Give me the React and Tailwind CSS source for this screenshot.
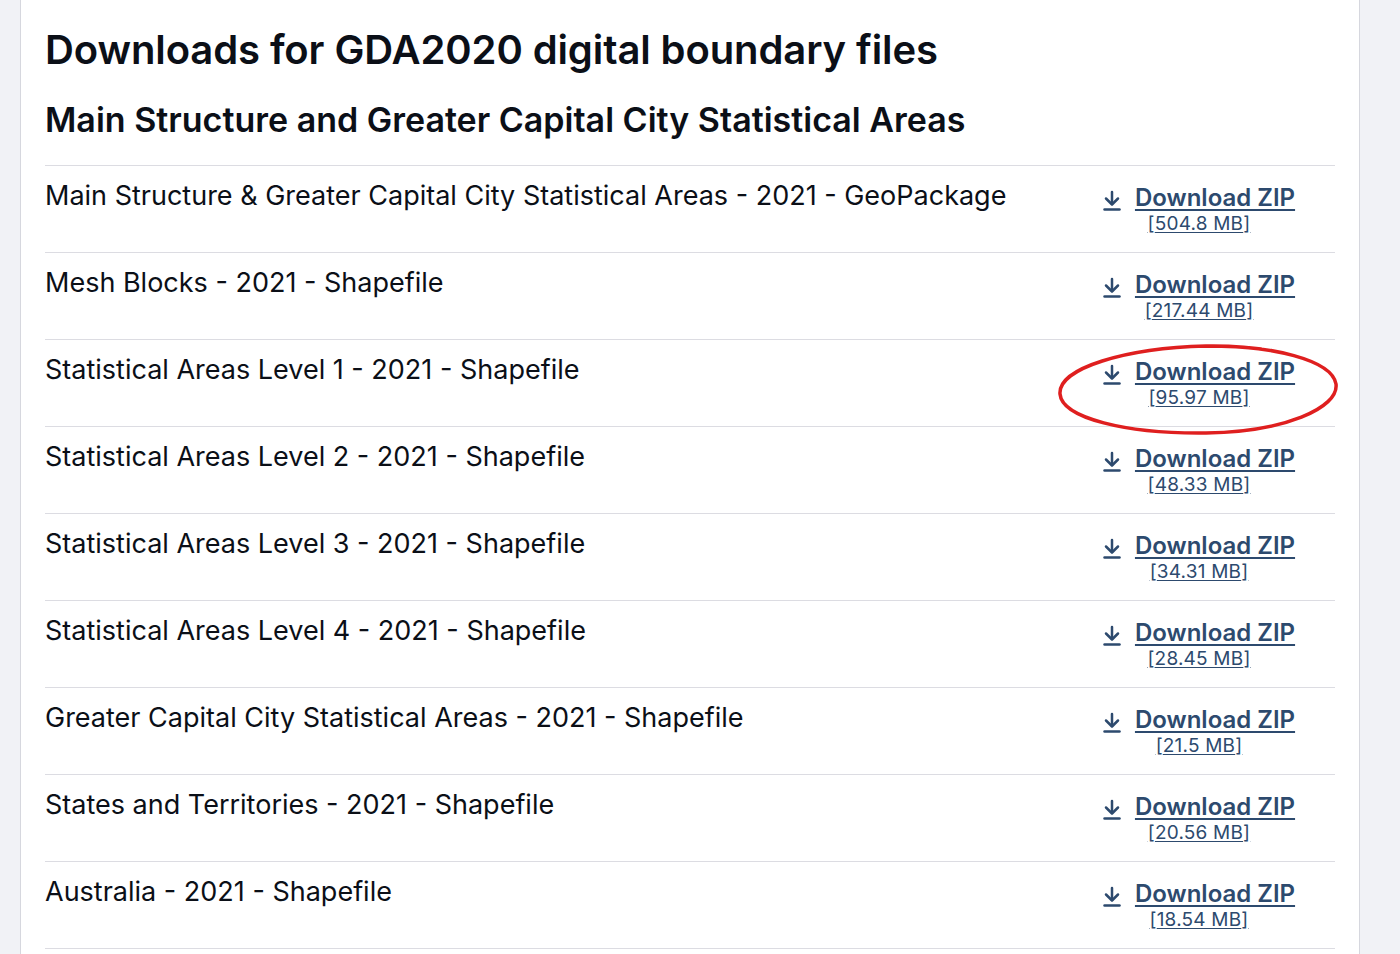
import React from 'react';

const files = [
    { name: 'Main Structure & Greater Capital City Statistical Areas - 2021 - GeoPackage', size: '504.8 MB' },
    { name: 'Mesh Blocks - 2021 - Shapefile', size: '217.44 MB' },
    { name: 'Statistical Areas Level 1 - 2021 - Shapefile', size: '95.97 MB', circled: true },
    { name: 'Statistical Areas Level 2 - 2021 - Shapefile', size: '48.33 MB' },
    { name: 'Statistical Areas Level 3 - 2021 - Shapefile', size: '34.31 MB' },
    { name: 'Statistical Areas Level 4 - 2021 - Shapefile', size: '28.45 MB' },
    { name: 'Greater Capital City Statistical Areas - 2021 - Shapefile', size: '21.5 MB' },
    { name: 'States and Territories - 2021 - Shapefile', size: '20.56 MB' },
    { name: 'Australia - 2021 - Shapefile', size: '18.54 MB' },
];

function DownloadIcon() {
    return (
        <svg width="18" height="21" viewBox="0 0 18 21" fill="none" stroke="currentColor" strokeWidth="2.5" strokeLinecap="round" strokeLinejoin="round" className="shrink-0 mt-[4px]">
            <path d="M9 2v12" />
            <path d="M3 8.5l6 6 6-6" />
            <path d="M1.5 19.5h15" />
        </svg>
    );
}

function DownloadLink({ size, circled }) {
    return (
        <div className="relative w-[272px] pt-[18px] flex flex-col items-center text-[#2d4a6e]">
            <a href="#" className="flex items-center gap-[14px]">
                <DownloadIcon />
                <span className="text-[24px] leading-[28px] font-semibold underline decoration-2 underline-offset-[3px]">Download ZIP</span>
            </a>
            <a href="#" className="text-[19px] leading-[24px] tracking-[0.2px] underline underline-offset-[2px]">[{size}]</a>
            {/* red annotation around this link */}
            {circled && (
                <svg className="absolute left-[-7px] top-[2px] pointer-events-none" width="284" height="94" viewBox="0 0 284 94" fill="none">
                    <path
                        d="M150 4 C 215 3, 276 18, 280 42 C 283 66, 228 90, 150 91 C 70 92, 6 76, 4 52 C 2 26, 70 6, 150 4 C 170 4, 190 5, 205 7"
                        stroke="#df1f1f"
                        strokeWidth="3.5"
                        strokeLinecap="round"
                    />
                </svg>
            )}
        </div>
    );
}

export default function App() {
    return (
        <div className="min-h-screen bg-[#f1f2f6] font-['Inter',sans-serif]">
            <div className="ml-[20px] w-[1340px] min-h-[954px] bg-white border-x border-[#d6d7de] px-[24px] pt-[26px]">
                <h1 className="text-[40px] leading-[48px] font-semibold text-[#0b0f17] tracking-[-0.1px]">Downloads for GDA2020 digital boundary files</h1>
                <h2 className="mt-[26px] text-[34px] leading-[40px] font-semibold text-[#0b0f17]">Main Structure and Greater Capital City Statistical Areas</h2>

                <ul className="mt-[25px] border-b border-[#dcdce2]">
                    {files.map(file => (
                        <li key={file.name} className="h-[87px] border-t border-[#dcdce2] flex justify-between items-start">
                            <div className="pt-[12px] text-[27px] leading-[36px] text-[#0b0f17]">{file.name}</div>
                            <DownloadLink size={file.size} circled={file.circled} />
                        </li>
                    ))}
                </ul>
            </div>
        </div>
    );
}
